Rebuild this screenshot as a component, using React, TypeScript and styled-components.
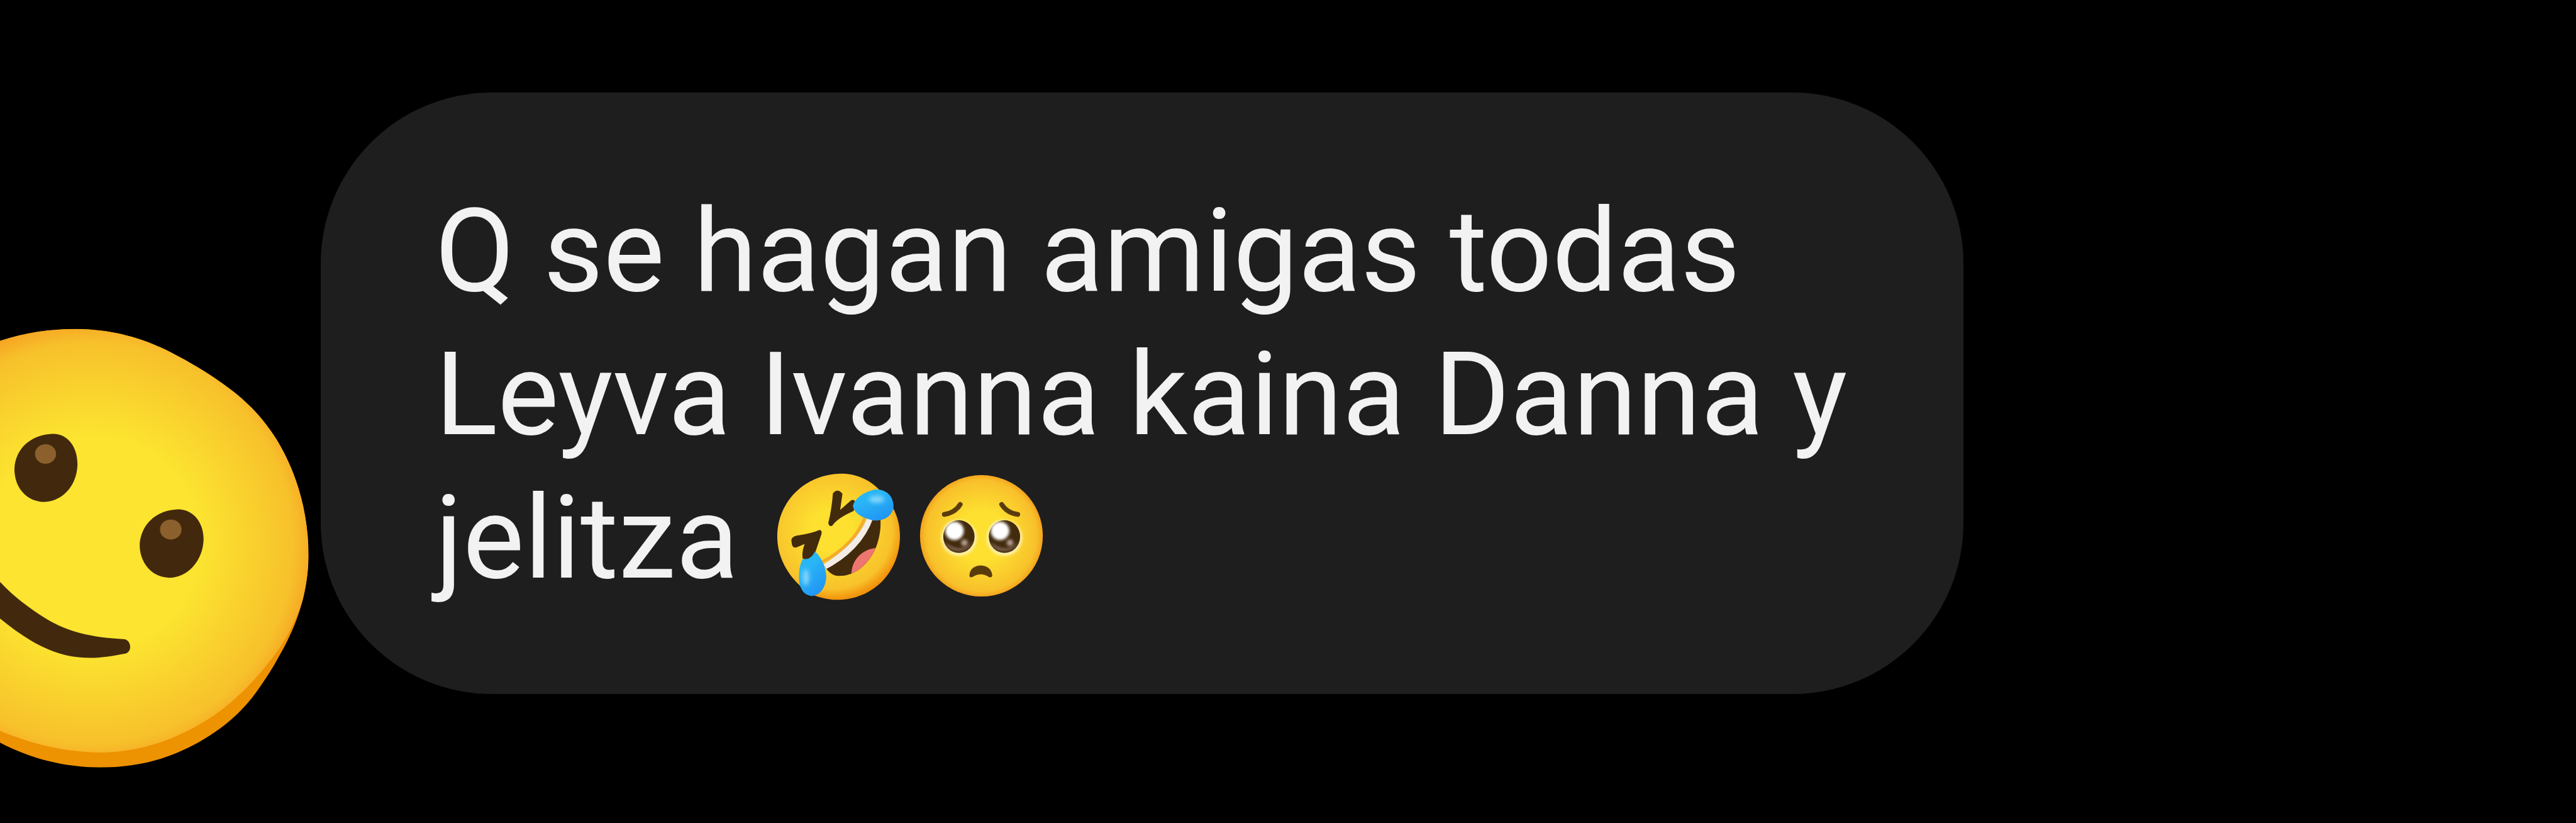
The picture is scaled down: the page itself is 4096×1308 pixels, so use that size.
import React from "react";
import styled, { createGlobalStyle } from "styled-components";

const GlobalStyle = createGlobalStyle`
  body {
    margin: 0;
    background: #000;
  }
`;

const Chat = styled.main`
  box-sizing: border-box;
  min-height: 100vh;
  padding: 147px 974px 0 0;
  overflow: hidden;
  background: #000;
  color: #f2f2f2;
  font-family: Roboto, "Liberation Sans", sans-serif;
`;

const MessageRow = styled.article`
  display: flex;
  align-items: flex-start;
`;

const Avatar = styled.svg`
  display: block;
  flex: none;
  width: 510px;
  height: 756px;
  margin-top: 345px;
`;

const Bubble = styled.div`
  flex: 1;
  min-width: 0;
  padding: 138px 176px 134px 182px;
  border-radius: 272px;
  background: #1e1e1e;
`;

const MessageText = styled.p`
  margin: 0;
  font-size: 184px;
  font-weight: 400;
  line-height: 228px;
`;

const Emoji = styled.svg`
  width: 227px;
  height: 227px;
  vertical-align: -50px;
`;

function SmileAvatar() {
  return (
    <Avatar viewBox="0 560 580 860" role="img" aria-label="Slightly smiling face">
      <defs>
        <radialGradient id="smile-skin" gradientUnits="userSpaceOnUse" cx="168" cy="982" r="403">
          <stop offset="0.48" stopColor="#fce430" />
          <stop offset="0.9" stopColor="#f7c12b" />
          <stop offset="1" stopColor="#f6a323" />
        </radialGradient>
        <clipPath id="smile-outline">
          <path d="M-20 624C30 604 85 595 138 595C205 596 260 612 310 638C343 655 373 673 400 692C443 722 472 752 495 787C535 848 558 925 558 1005C557 1070 539 1128 504 1188C491 1212 477 1233 461 1255C430 1297 385 1332 330 1357C285 1378 235 1388 180 1388C115 1387 55 1372 0 1343L-20 1335Z" />
        </clipPath>
      </defs>
      <g clipPath="url(#smile-outline)">
        <rect x="-20" y="560" width="600" height="860" fill="#ed9200" />
        <path
          d="M-20 560H600V1000L556 1060C538 1118 520 1156 487 1197C457 1235 427 1265 391 1291C335 1330 265 1360 180 1361C115 1360 50 1345 -20 1313Z"
          fill="url(#smile-skin)"
        />
      </g>
      <g transform="translate(0 560) scale(.3827 .5485)">
        <path
          d="M-40 865C40 935 120 975 215 1018C330 1066 430 1080 590 1087C620 1092 626 1128 592 1134C520 1144 450 1152 370 1146C230 1136 100 1080 -40 995Z"
          fill="#42290d"
        />
        <g fill="#42290d">
          <path d="M240 410C312 405 366 447 366 510C364 582 292 634 205 634C124 632 68 586 68 526C72 456 148 414 240 410Z" />
          <path d="M833 659C905 655 962 697 962 757C960 828 886 884 799 884C718 882 660 835 660 775C666 706 742 662 833 659Z" />
        </g>
        <g fill="#8b602c">
          <ellipse cx="215" cy="476" rx="50" ry="32" />
          <ellipse cx="807" cy="725" rx="51" ry="33" />
        </g>
      </g>
    </Avatar>
  );
}

function LaughingEmoji() {
  return (
    <Emoji viewBox="18 3 774 774" role="img" aria-label="🤣">
      <defs>
        <radialGradient id="laugh-skin" gradientUnits="userSpaceOnUse" cx="355" cy="350" r="375">
          <stop offset="0.3" stopColor="#fde030" />
          <stop offset="0.85" stopColor="#f8c22b" />
          <stop offset="1" stopColor="#f2930c" />
        </radialGradient>
        <linearGradient id="laugh-tear" x1="0" y1="0" x2="0.6" y2="1">
          <stop offset="0.4" stopColor="#29b6f6" />
          <stop offset="1" stopColor="#2196f3" />
        </linearGradient>
        <filter id="laugh-soft" x="-50%" y="-50%" width="200%" height="200%">
          <feGaussianBlur stdDeviation="10" />
        </filter>
        <clipPath id="laugh-mouth">
          <path d="M540 285L612 290C616 350 600 430 570 480C530 550 470 596 395 598C360 598 335 575 312 535C410 470 500 390 540 285Z" />
        </clipPath>
      </defs>
      <g transform="scale(1.033 1)">
        <path
          d="M410 43C500 45 560 85 600 125C680 205 714 290 714 380C714 580 570 727 385 727C330 727 280 712 235 690C130 610 70 500 70 385C70 190 220 43 410 43Z"
          fill="url(#laugh-skin)"
        />
        <path d="M530 280C490 390 410 465 300 525" fill="none" stroke="#f5ac28" strokeWidth="16" />
        <g clipPath="url(#laugh-mouth)">
          <rect x="300" y="270" width="330" height="340" fill="#422b0d" />
          <path d="M460 610C450 530 500 455 590 445L620 600Z" fill="#ed7770" />
          <path d="M545 265C505 390 420 475 295 540" fill="none" stroke="#f4ede6" strokeWidth="66" />
        </g>
        <path d="M362 150Q386 120 412 152L400 240L458 187Q482 180 482 212L470 246Q385 284 358 326Q340 332 338 310C350 260 358 205 362 150Z" fill="#422b0d" />
        <path d="M145 412Q138 386 175 378Q240 370 292 348Q306 350 302 370L262 492Q240 527 203 502Q198 465 214 424L170 443Q146 448 145 412Z" fill="#422b0d" />
        <path d="M467 218C475 175 530 140 585 128C645 128 678 165 680 220C676 270 635 300 575 297C525 285 475 265 467 218Z" fill="url(#laugh-tear)" />
        <path d="M268 465C295 490 325 540 327 600C325 660 295 705 250 706C210 703 184 665 184 605C184 560 190 530 205 503C235 515 255 490 268 465Z" fill="url(#laugh-tear)" />
        <g fill="#81d4fa" filter="url(#laugh-soft)">
          <ellipse cx="592" cy="182" rx="40" ry="20" />
          <ellipse cx="220" cy="605" rx="17" ry="44" />
        </g>
      </g>
    </Emoji>
  );
}

function PleadingEye({ x }: { x: number }) {
  return (
    <g transform={`translate(${x} 384)`}>
      <circle cy="8" r="96" fill="#fff3b0" filter="url(#plead-soft)" />
      <ellipse rx="85" ry="89" fill="#422b0d" />
      <path d="M-78 30C-50 92 45 96 80 25C50 62 10 72 -20 62C-45 55 -60 45 -78 30Z" fill="#8d7362" filter="url(#plead-soft)" />
      <circle cx="-24" cy="-31" r="50" fill="#fff" filter="url(#plead-soft)" />
      <circle cx="30" cy="33" r="18" fill="#b29a8e" filter="url(#plead-soft)" />
    </g>
  );
}

function PleadingEmoji() {
  return (
    <Emoji viewBox="792 3 774 774" role="img" aria-label="🥺">
      <defs>
        <radialGradient id="plead-skin" gradientUnits="userSpaceOnUse" cx="1179" cy="380" r="342">
          <stop offset="0.4" stopColor="#fde030" />
          <stop offset="0.88" stopColor="#f8c02b" />
          <stop offset="1" stopColor="#f39a18" />
        </radialGradient>
        <filter id="plead-soft" x="-50%" y="-50%" width="200%" height="200%">
          <feGaussianBlur stdDeviation="7" />
        </filter>
      </defs>
      <ellipse cx="1179" cy="380" rx="333" ry="329" fill="url(#plead-skin)" />
      <PleadingEye x={1057} />
      <PleadingEye x={1304} />
      <g fill="none" stroke="#5a3c0c" strokeLinecap="round">
        <path d="M978 264Q1035 256 1064 210" strokeWidth="26" />
        <path d="M1289 210Q1318 256 1376 264" strokeWidth="26" />
      </g>
      <path d="M1114 596C1114 522 1236 522 1238 596Q1234 610 1218 602Q1176 576 1132 602Q1116 610 1114 596Z" fill="#5a3c0c" />
    </Emoji>
  );
}

export default function App() {
  return (
    <>
      <GlobalStyle />
      <Chat>
        <MessageRow>
          <SmileAvatar />
          <Bubble>
            <MessageText>
              Q se hagan amigas todas Leyva Ivanna kaina Danna y jelitza <LaughingEmoji />
              <PleadingEmoji />
            </MessageText>
          </Bubble>
        </MessageRow>
      </Chat>
    </>
  );
}
